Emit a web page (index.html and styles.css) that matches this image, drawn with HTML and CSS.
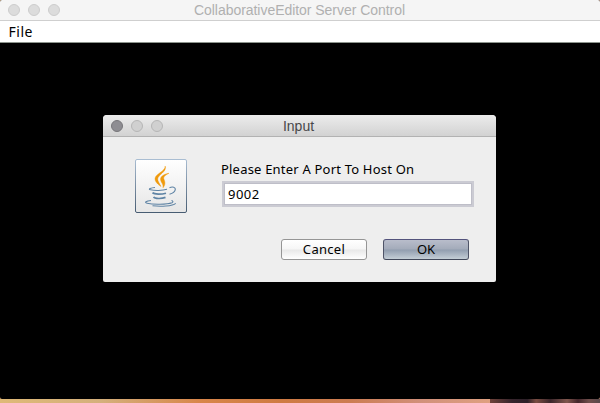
FILE: index.html
```html
<!DOCTYPE html>
<html lang="en">
<head>
<meta charset="utf-8">
<title>CollaborativeEditor Server Control</title>
<link rel="stylesheet" href="styles.css">
</head>
<body>
<main class="window">
  <header class="titlebar">
    <div class="lights"><i></i><i></i><i></i></div>
    <h1 class="title main-title">CollaborativeEditor Server Control</h1>
  </header>
  <nav class="menubar"><span class="menu">File</span></nav>
  <section class="workspace">
    <form class="dialog">
      <header class="dialog-bar">
        <div class="lights"><i class="close"></i><i></i><i></i></div>
        <h2 class="title dialog-title">Input</h2>
      </header>
      <div class="content">
        <svg class="java" width="52" height="54" viewBox="0 0 52 54">
          <defs>
            <linearGradient id="face" x1="0" y1="0" x2="0" y2="1"><stop offset="0" stop-color="#fff"/><stop offset="1" stop-color="#e6e6e6"/></linearGradient>
            <linearGradient id="edge" x1="0" y1="0" x2="0" y2="1"><stop offset="0" stop-color="#a9bdd2"/><stop offset="1" stop-color="#475c72"/></linearGradient>
          </defs>
          <rect x=".5" y=".5" width="51" height="53" rx="1.5" fill="url(#face)" stroke="url(#edge)"/>
          <g fill="#f09a0c" stroke="#f09a0c" stroke-width=".4">
            <path d="M30.200 7c2 6-7.200 8.500-7.500 13 0 2.500 2 4.500 3.300 7.500-3-2-6-4.500-6-7.700 0-5 10.500-7.300 10.200-12.800z"/>
            <path d="M34 14.300c-3.500 1.700-5.500 3.200-5.300 5 .3 2 3 5-.700 9.500.8-4-2.500-5.500-2.500-8.500 0-3.500 4.500-5.500 8.500-6z"/>
          </g>
          <g fill="none" stroke="#5f84a5" stroke-width="1.100">
            <path d="M20 28.500c-4 .3-7.500 1.700-4.500 2.300 4 1 12 .9 16.500-.5"/>
            <path d="M34.500 28.700c3-1.500 6.300-.5 5.800 2-.4 2.300-3 3.800-5.800 4.600"/>
            <path stroke-width="1.700" d="M17.500 33.700c2 1.900 9 1.700 13.500.5M18.500 38c1.500 1.900 8 1.900 12 .4"/>
            <path d="M16 41.500c-5 .3-7 2-4 2.700 6 1.500 20 1.400 25-.5 1.500-.8 1-1.700-.5-2.200"/>
            <path d="M17.500 46.800c8 .9 20 .5 23.200-2.500"/>
          </g>
        </svg>
        <div class="entry">
          <label class="prompt" for="port">Please Enter A Port To Host On</label>
          <input class="field" id="port" type="text" value="9002">
        </div>
      </div>
      <footer class="actions">
        <button class="button cancel" type="button"><span>Cancel</span></button>
        <button class="button ok" type="button"><span>OK</span></button>
      </footer>
    </form>
  </section>
</main>
<div class="desktop"></div>
</body>
</html>
```
FILE: styles.css
```css
* { box-sizing: border-box; }
body {
  margin: 0;
  width: 600px;
  height: 403px;
  overflow: hidden;
  background: linear-gradient(90deg, #dfac73, #d29a7a);
  font-family: "Noto Sans", "Open Sans", sans-serif;
  font-size: 13px;
  color: #000;
}
.window {
  height: 399px;
  border-radius: 2px;
  overflow: hidden;
  background: #000;
}
.titlebar {
  display: grid;
  grid-template-columns: 60px 1fr 61px;
  align-items: center;
  height: 21px;
  background: #f5f5f5;
  border-bottom: 1px solid #cfcfcf;
}
.lights {
  display: flex;
  gap: 8px;
  padding-left: 8px;
}
.lights i {
  width: 12px;
  height: 12px;
  border: 1px solid #cdcdcd;
  border-radius: 50%;
  background: #dcdcdc;
}
.title {
  margin: 0;
  font-family: "Liberation Sans", sans-serif;
  font-weight: 400;
  text-align: center;
  white-space: nowrap;
}
.main-title {
  height: 20px;
  font-size: 14px;
  line-height: 21px;
  letter-spacing: -0.04px;
  color: #b0b0b0;
}
.menubar {
  height: 22px;
  padding-left: 8.5px;
  line-height: 21px;
  background: #fff;
  border-bottom: 1px solid #8c948c;
}
.menu {
  display: block;
  font-size: 14px;
  letter-spacing: 0.5px;
}
.workspace {
  display: flex;
  justify-content: center;
  padding: 72px 1px 0 0;
}
.dialog {
  width: 393px;
  height: 167px;
  border-radius: 4px 4px 2px 2px;
  overflow: hidden;
  background: #eee;
}
.dialog-bar {
  display: grid;
  grid-template-columns: 66px 1fr 66px;
  align-items: center;
  height: 22px;
  background: linear-gradient(#ececec, #d2d2d2);
  border-bottom: 1px solid #b2b2b2;
}
.dialog-bar i {
  background: #d0d0d0;
  border-color: #b6b6b6;
}
.dialog-bar .close {
  background: #8e8d92;
  border-color: #77767a;
}
.dialog-title {
  height: 21px;
  padding-right: 2px;
  font-size: 14px;
  line-height: 23px;
  color: #48484a;
}
.content {
  display: flex;
  padding: 22px 22px 0 32px;
  gap: 34px;
  height: 76px;
}
.entry {
  display: flex;
  flex-direction: column;
}
.prompt {
  height: 22px;
  line-height: 21px;
  letter-spacing: 0.2px;
  white-space: nowrap;
}
.field {
  width: 252px;
  height: 26px;
  margin: 0 0 0 1px;
  padding: 0 0 0 3px;
  border: 3px solid #cbcbd3;
  outline: 1px solid #bebec8;
  outline-offset: -3px;
  background: #fff;
  font: inherit;
  letter-spacing: 0.5px;
}
.actions {
  display: flex;
  justify-content: flex-end;
  gap: 16px;
  padding: 26px 27px 0 0;
}
.button {
  width: 86px;
  height: 21px;
  padding: 0;
  border: 1px solid #959595;
  border-radius: 3px;
  background: linear-gradient(#fff 0, #f6f6f6 48%, #e8e8e8 52%, #fff 100%);
  font: inherit;
  line-height: 19px;
}
.cancel {
  letter-spacing: 0.3px;
}
.ok {
  border-color: #53537c #4f5468 #41485a;
  background: linear-gradient(#b9bdcb 0, #a3abba 48%, #919daf 52%, #c4ced6 100%);
}
.desktop {
  height: 4px;
  background:
    linear-gradient(90deg, #70433a 0, #36242c 20%, #2c2028 34%, #7a4d42 42%, #3b262b 55%, #80564d 70%, #43262b 80%, #704e4b 90%, #59484b 100%) 490px 0 / 110px 4px no-repeat,
    linear-gradient(90deg, #dfb977 0, #d4b07c 100px, #d8864a 200px, #cf7b43 280px, #cc7c52 350px, #d1907a 420px, #dfa080 490px);
}
```
